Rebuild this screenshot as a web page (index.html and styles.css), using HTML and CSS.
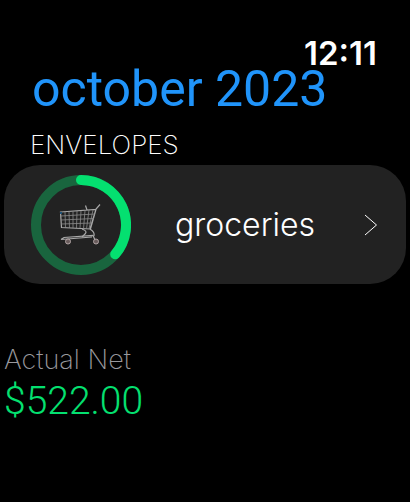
FILE: index.html
```
<!DOCTYPE html>
<html lang="en">
<head>
    <meta charset="utf-8">
    <title>Envelopes</title>
    <link rel="stylesheet" href="styles.css">
</head>
<body>
    <header class="status-bar">
        <time class="clock">12:11</time>
    </header>
    <main>
        <h1 class="month">october 2023</h1>

        <section>
            <h2 class="section-title">ENVELOPES</h2>
            <a class="envelope" href="#groceries">
                <svg class="ring" viewBox="0 0 100 100" aria-hidden="true">
                    <circle class="ring-track" cx="50" cy="50" r="45"/>
                    <path class="ring-value" d="M50 5A45 45 0 0 1 84.2 79.3"/>
                    <g class="cart">
                        <path class="cart-frame" d="M29.500 37L65 34.500 59.500 54 30.500 52.500ZM69 29.500L65 34 59 54M56 35L54.500 30.500M30 64.500L33 62.500 62 60.500 64 65M30 64.500L61 62"/>
                        <path class="cart-frame" d="M51 54Q57 56 54 59L51 62M59 54Q64 57 63 61"/>
                        <path class="cart-wires" d="M30 41L64 39M30 45L63 43.500M30 49L61 48M34 37L34.500 53M38 37L38.500 53M42 36.500L42 53M46 36L45.500 53M50 36L49 53M54 35.500L52.500 54M58 35L55.500 54M62 35L58 54"/>
                        <circle class="cart-wheel" cx="37" cy="66.500" r="2.500"/>
                        <circle class="cart-wheel" cx="65" cy="66.500" r="2.500"/>
                        <path class="cart-badge" d="M29 38h2"/>
                    </g>
                </svg>
                <span class="envelope-name">groceries</span>
                <svg class="chevron" viewBox="0 0 14 22" aria-hidden="true">
                    <path d="M1 1L12.500 11 1 21"/>
                </svg>
            </a>
        </section>

        <section class="net">
            <div class="net-label">Actual Net</div>
            <div class="net-value">$522.00</div>
        </section>
    </main>
</body>
</html>
```

FILE: styles.css
```
body {
    margin: 0;
    background: #000;
    color: #fff;
    font-family: Inter, "Liberation Sans", sans-serif;
    font-weight: 300;
}
.status-bar {
    padding: 33px 33px 0;
    text-align: right;
}
.clock {
    display: block;
    font-size: 33px;
    font-weight: 600;
    line-height: 40px;
}
main {
    padding: 0 4px;
}
.month {
    margin: 0;
    padding-left: 28px;
    font-family: Roboto, sans-serif;
    font-size: 50px;
    font-weight: 400;
    line-height: 32px;
    color: #2094fa;
}
.section-title {
    margin: 22px 0 0;
    padding-left: 26px;
    font-size: 26px;
    font-weight: 200;
    line-height: 36px;
}
.envelope {
    display: flex;
    align-items: center;
    margin-top: 2px;
    padding: 10px 28px 9px 27px;
    border-radius: 36px;
    background: #222;
    color: #fff;
    text-decoration: none;
}
.ring {
    width: 100px;
    height: 100px;
}
.ring-track,
.ring-value {
    fill: none;
    stroke-width: 10;
    stroke-linecap: round;
}
.ring-track {
    stroke: #19653e;
}
.ring-value {
    stroke: #04e070;
}
.cart-frame,
.cart-wires,
.cart-badge {
    fill: none;
    stroke: #a8a8a8;
    stroke-width: 1.2;
}
.cart-wires {
    stroke: #8c8c8c;
    stroke-width: 0.8;
}
.cart-badge {
    stroke: #1d5278;
    stroke-width: 2;
}
.cart-wheel {
    fill: #695c5c;
    stroke: #b0a4a4;
}
.envelope-name {
    flex: 1;
    padding-left: 44px;
    font-size: 32px;
    line-height: 40px;
}
.chevron {
    width: 14px;
    height: 22px;
}
.chevron path {
    fill: none;
    stroke: #fff;
}
.net {
    padding-top: 60px;
}
.net-label {
    font-size: 27px;
    font-weight: 200;
    line-height: 32px;
    color: #98989d;
}
.net-value {
    font-family: Roboto, sans-serif;
    font-size: 39px;
    line-height: 50px;
    color: #04e070;
}
```
